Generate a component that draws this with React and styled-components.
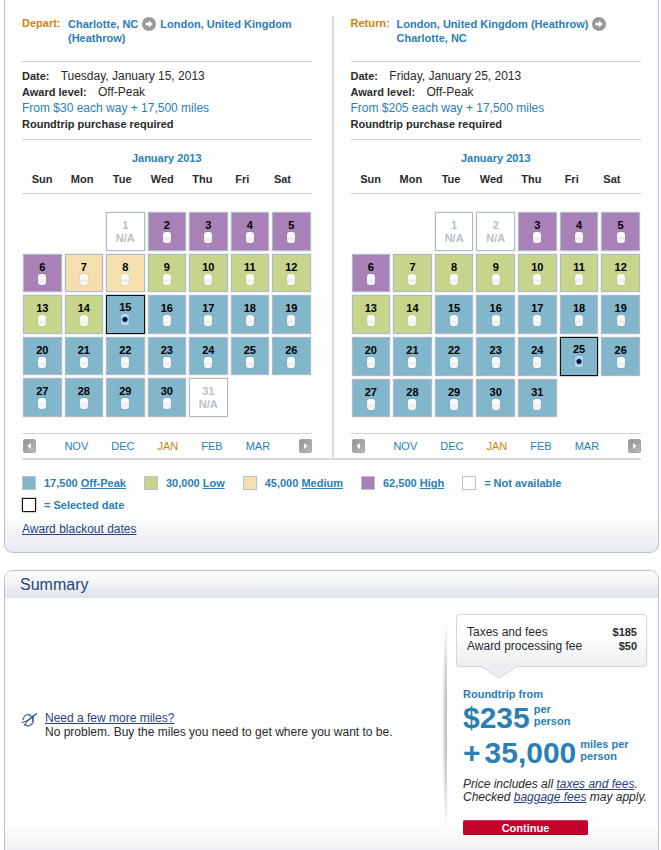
import React, { useState } from 'react';
import styled, { createGlobalStyle } from 'styled-components';

const GlobalStyle = createGlobalStyle`
  * { box-sizing: border-box; }
  body {
    margin: 0;
    background: #fefefe;
    color: #2b2b2b;
    font: 12px/14px "Liberation Sans", Arial, sans-serif;
  }
`;

const BLUE = '#2a7fb5';
const NAVY = '#2a4283';
const ORANGE = '#cb8412';
const RULE = '#cfd0d1';
const EDGE = '#b9c1cc';
const LEVELS = {
  offpeak: '#82b6cb',
  low: '#c7d58c',
  medium: '#f4dfae',
  high: '#a881b6',
  none: '#ffffff',
};

const Page = styled.main`
  margin: 0 2px 0 4px;
`;

const CalendarPanel = styled.section`
  padding: 16px 17px;
  border: 1px solid ${EDGE};
  border-top: 0;
  border-radius: 0 0 9px 9px;
  background: linear-gradient(to top, #e8ebee, #f1f2f5 16px, #fefefe 38px);
`;

const Columns = styled.div`
  display: grid;
  grid-template-columns: 1fr 1fr;
  border-bottom: 2px solid #d8d9da;
`;

const Column = styled.section`
  padding: 1px 20px 0 0;

  & + & {
    padding: 1px 0 0 17px;
    border-left: 2px solid #dadbdc;
  }
`;

const Route = styled.header`
  display: flex;
  height: 44px;
  font-size: 11px;
  font-weight: bold;
  color: ${BLUE};
`;

const Direction = styled.span`
  flex: 0 0 46px;
  line-height: 12px;
  color: ${ORANGE};
`;

const Cities = styled.h2`
  margin: 0;
  font-size: 11px;
  line-height: 14px;

  svg {
    margin: 0 4px;
    vertical-align: top;
  }
`;

const Details = styled.div`
  padding: 6px 0 7px;
  border: solid ${RULE};
  border-width: 1px 0;
  line-height: 16px;
`;

const Detail = styled.p`
  margin: 0;
  color: ${(p) => (p.$price ? BLUE : 'inherit')};

  strong {
    margin-right: 8px;
    font-size: 11px;
  }
`;

const MonthTitle = styled.h3`
  margin: 11px 0 7px;
  font-size: 11px;
  line-height: 14px;
  text-align: center;
  color: ${BLUE};
`;

const Weekdays = styled.div`
  display: grid;
  grid-template-columns: repeat(7, 1fr);
  padding: 0 9px 7px 0;
  border-bottom: 1px solid ${RULE};
  font-size: 11px;
  font-weight: bold;
  text-align: center;
`;

const Days = styled.div`
  display: grid;
  grid-template-columns: repeat(7, 1fr);
  gap: 3px;
  margin: 18px 1px 16px;
`;

const Day = styled.label`
  display: flex;
  flex-direction: column;
  align-items: center;
  grid-column-start: ${(p) => p.$start || 'auto'};
  aspect-ratio: 1;
  padding-top: ${(p) => (p.$selected ? '5px' : '6px')};
  border: 1px solid ${(p) => (p.$selected ? '#111' : '#b0b9c7')};
  box-shadow: ${(p) => (p.$selected ? '0 0 1px #000' : '0 0 1px #b0b9c7')};
  background: ${(p) => LEVELS[p.$level]};
  font-size: 11px;
  font-weight: bold;
  line-height: 13px;
  color: ${(p) => (p.$level === 'none' ? '#b9c0c9' : '#000')};
  cursor: ${(p) => (p.$level === 'none' ? 'default' : 'pointer')};
`;

const Radio = styled.input`
  appearance: none;
  width: 8px;
  height: 11px;
  margin: 0;
  border-radius: 3px;
  background: linear-gradient(#fff, #f8f8f8 45%, #ececec 60%, #fff);
  box-shadow: 0 0 1px #777;

  &:checked {
    background: radial-gradient(circle, #06182d 2px, #9cc8f0 3px, #d5ebfb 6px);
  }
`;

const MonthNav = styled.nav`
  display: flex;
  align-items: center;
  justify-content: space-between;
  height: 25px;
  padding-left: 1px;
  border-top: 1px solid ${RULE};
`;

const Months = styled.div`
  display: flex;
  gap: 23px;
  font-size: 11px;
`;

const MonthLink = styled.a`
  color: ${(p) => (p.$current ? ORANGE : BLUE)};
  text-decoration: none;
`;

const ArrowButton = styled.button`
  display: flex;
  align-items: center;
  justify-content: center;
  width: 13px;
  height: 14px;
  padding: 0;
  border: 1px solid #a5a5a5;
  border-radius: 2px;
  background: linear-gradient(135deg, #939393, #b9b9b9);
`;

const Legend = styled.ul`
  display: flex;
  flex-wrap: wrap;
  gap: 8px 18px;
  margin: 16px 0 10px;
  padding: 0;
  list-style: none;
  font-size: 11px;
  font-weight: bold;
  color: ${BLUE};
`;

const LegendItem = styled.li`
  display: flex;
  gap: 8px;
  white-space: pre;

  a { color: inherit; }
`;

const Swatch = styled.span`
  width: 14px;
  height: 14px;
  border: 1px solid ${(p) => (p.$selected ? '#111' : EDGE)};
  box-shadow: ${(p) => (p.$selected ? '0 0 1px #000' : 'none')};
  background: ${(p) => LEVELS[p.$level]};
`;

const TextLink = styled.a`
  color: ${NAVY};
`;

const SummaryPanel = styled.section`
  margin-top: 17px;
  border: 1px solid ${EDGE};
  border-bottom: 0;
  border-radius: 9px 9px 0 0;
  background: linear-gradient(to top, #eeeff2, #fefefe 26px);
`;

const SummaryTitle = styled.h2`
  margin: 0;
  padding: 0 15px;
  border-radius: 8px 8px 0 0;
  background: linear-gradient(#fcfdfd, #f0f2f4 50%, #dfe3e7);
  font-size: 16px;
  font-weight: normal;
  line-height: 27px;
  color: ${NAVY};
`;

const SummaryBody = styled.div`
  display: grid;
  grid-template-columns: 1fr 211px;
  padding: 16px 0;
`;

const MilesOffer = styled.div`
  display: flex;
  align-items: center;
  gap: 8px;
  padding-left: 16px;
  background: radial-gradient(ellipse at 100% 50%, #b4b4b4, #d6d6d6 40%, transparent 70%) right / 5px 100% no-repeat;

  p { margin: 0; }
  svg { margin-bottom: 9px; }
`;

const Fare = styled.aside`
  padding: 0 11px 0 9px;
`;

const Callout = styled.dl`
  position: relative;
  display: grid;
  grid-template-columns: 1fr auto;
  margin: 0 0 20px;
  padding: 10px 9px 13px 10px;
  border: 1px solid #d0d6dd;
  border-radius: 4px;
  background: linear-gradient(#fff 40%, #eceef1);
  box-shadow: 0 0 1px #c5ccd5;

  dd {
    margin: 0;
    font-size: 11px;
    font-weight: bold;
    text-align: right;
  }
`;

const Pointer = styled.svg`
  position: absolute;
  top: 100%;
  left: 24px;
`;

const Prices = styled.div`
  padding-left: 7px;
`;

const PriceLead = styled.p`
  margin: 0 0 2px;
  font-size: 11px;
  font-weight: bold;
  color: ${BLUE};
`;

const Price = styled.p`
  display: flex;
  gap: 4px;
  margin: 0 0 5px;
  font-size: 30px;
  font-weight: bold;
  line-height: 30px;
  color: ${BLUE};
`;

const Unit = styled.span`
  font-size: 11px;
  line-height: 12px;
`;

const Note = styled.p`
  margin: 10px 0 16px;
  font-style: italic;
  line-height: 13px;
  white-space: nowrap;
`;

const ContinueButton = styled.button`
  display: block;
  width: 125px;
  height: 15px;
  padding: 0;
  border: 0;
  border-radius: 2px;
  background: #c4022c;
  box-shadow: inset 0 -1px 0 #a80225, inset 0 1px 0 #d23a58;
  font: bold 11px/14px "Liberation Sans", Arial, sans-serif;
  color: #fff;
`;

const CircleArrow = () => (
  <svg width="14" height="14" viewBox="0 0 14 14" role="img" aria-label="to">
    <circle cx="7" cy="7" r="7" fill="#999" />
    <path d="M3.4 5.8h3.4V3.6L10.8 7 6.8 10.4V8.2H3.4z" fill="#fff" />
  </svg>
);

const Triangle = ({ left }) => (
  <svg width="5" height="6" viewBox="0 0 5 6" aria-hidden="true">
    <path d={left ? 'M4 0v6L0.5 3z' : 'M1 0v6l3.5-3z'} fill="#fff" />
  </svg>
);

const PlaneIcon = () => (
  <svg width="16" height="14" viewBox="0 0 16 14" aria-hidden="true">
    <path d="M9 1.6C5.6 0.8 2.4 3 2.1 6.6M3.6 11.6c3.8 2.6 8.8 0 8.8-4.4" fill="none" stroke="#6073a3" strokeWidth="1.4" strokeLinecap="round" />
    <path d="M15.4 0.8L5.4 8.6" fill="none" stroke="#3c5289" strokeWidth="1.4" strokeLinecap="round" />
    <path d="M12.6 2.4L7 2.6l1 1 3 0.2zM13.2 3.4L12 8.2l-1-.8-.2-2.6z" fill="#3c5289" />
    <path d="M6 8L0.8 9.6M5.6 8.4L4 12" fill="none" stroke="#3c5289" strokeWidth="1" strokeLinecap="round" />
  </svg>
);

const buildMonth = (notAvailableTo, highTo, mediumTo, lowTo, extra = []) =>
  Array.from({ length: 31 }, (_, i) => {
    const day = i + 1;
    if (day <= notAvailableTo || extra.includes(day)) return { day, level: 'none' };
    if (day <= highTo) return { day, level: 'high' };
    if (day <= mediumTo) return { day, level: 'medium' };
    if (day <= lowTo) return { day, level: 'low' };
    return { day, level: 'offpeak' };
  });

const departDays = buildMonth(1, 6, 8, 14, [31]);
const returnDays = buildMonth(2, 6, 6, 14);

const weekdays = ['Sun', 'Mon', 'Tue', 'Wed', 'Thu', 'Fri', 'Sat'];
const months = ['NOV', 'DEC', 'JAN', 'FEB', 'MAR'];
const legend = [
  ['offpeak', '17,500', 'Off-Peak'],
  ['low', '30,000', 'Low'],
  ['medium', '45,000', 'Medium'],
  ['high', '62,500', 'High'],
];

function Flight({ direction, cities, date, price, days, initial }) {
  const [selected, setSelected] = useState(initial);
  return (
    <Column>
      <Route>
        <Direction>{direction}:</Direction>
        <Cities>{cities}</Cities>
      </Route>
      <Details>
        <Detail><strong>Date:</strong> {date}</Detail>
        <Detail><strong>Award level:</strong> Off-Peak</Detail>
        <Detail $price>{price}</Detail>
        <Detail><strong>Roundtrip purchase required</strong></Detail>
      </Details>
      <MonthTitle>January 2013</MonthTitle>
      <Weekdays>{weekdays.map((d) => <span key={d}>{d}</span>)}</Weekdays>
      <Days role="radiogroup" aria-label={`${direction} date`}>
        {days.map(({ day, level }) => (
          <Day
            key={day}
            as={level === 'none' ? 'div' : 'label'}
            $level={level}
            $selected={day === selected}
            $start={day === 1 ? 3 : undefined}
          >
            {day}
            {level === 'none' ? <span>N/A</span> : (
              <Radio
                type="radio"
                name={direction}
                value={day}
                checked={day === selected}
                onChange={() => setSelected(day)}
              />
            )}
          </Day>
        ))}
      </Days>
      <MonthNav aria-label={`${direction} month`}>
        <ArrowButton type="button" aria-label="Earlier months"><Triangle left /></ArrowButton>
        <Months>
          {months.map((m) => <MonthLink key={m} href="#" $current={m === 'JAN'}>{m}</MonthLink>)}
        </Months>
        <ArrowButton type="button" aria-label="Later months"><Triangle /></ArrowButton>
      </MonthNav>
    </Column>
  );
}

export default function App() {
  return (
    <>
      <GlobalStyle />
      <Page>
        <CalendarPanel>
          <Columns>
            <Flight
              direction="Depart"
              cities={<>Charlotte, NC<CircleArrow />London, United Kingdom (Heathrow)</>}
              date="Tuesday, January 15, 2013"
              price="From $30 each way + 17,500 miles"
              days={departDays}
              initial={15}
            />
            <Flight
              direction="Return"
              cities={<>London, United Kingdom (Heathrow)<CircleArrow /> Charlotte, NC</>}
              date="Friday, January 25, 2013"
              price="From $205 each way + 17,500 miles"
              days={returnDays}
              initial={25}
            />
          </Columns>
          <Legend>
            {legend.map(([level, miles, name]) => (
              <LegendItem key={level}>
                <Swatch $level={level} />
                <span>{miles} <a href="#">{name}</a></span>
              </LegendItem>
            ))}
            <LegendItem><Swatch $level="none" />= Not available</LegendItem>
            <LegendItem><Swatch $level="none" $selected />= Selected date</LegendItem>
          </Legend>
          <TextLink href="#">Award blackout dates</TextLink>
        </CalendarPanel>

        <SummaryPanel>
          <SummaryTitle>Summary</SummaryTitle>
          <SummaryBody>
            <MilesOffer>
              <PlaneIcon />
              <div>
                <TextLink href="#">Need a few more miles?</TextLink>
                <p>No problem. Buy the miles you need to get where you want to be.</p>
              </div>
            </MilesOffer>
            <Fare>
              <Callout>
                <dt>Taxes and fees</dt>
                <dd>$185</dd>
                <dt>Award processing fee</dt>
                <dd>$50</dd>
                <Pointer width="36" height="13" viewBox="0 0 36 13" aria-hidden="true">
                  <path d="M0 0h36L18 12z" fill="#eceef1" />
                  <path d="M0.5 0.5L18 12 35.5 0.5" fill="none" stroke="#cdd3da" />
                </Pointer>
              </Callout>
              <Prices>
                <PriceLead>Roundtrip from</PriceLead>
                <Price>$235<Unit>per<br />person</Unit></Price>
                <Price><span>+</span><span>35,000</span><Unit>miles per<br />person</Unit></Price>
                <Note>
                  Price includes all <TextLink href="#">taxes and fees</TextLink>.<br />
                  Checked <TextLink href="#">baggage fees</TextLink> may apply.
                </Note>
                <ContinueButton type="button">Continue</ContinueButton>
              </Prices>
            </Fare>
          </SummaryBody>
        </SummaryPanel>
      </Page>
    </>
  );
}
